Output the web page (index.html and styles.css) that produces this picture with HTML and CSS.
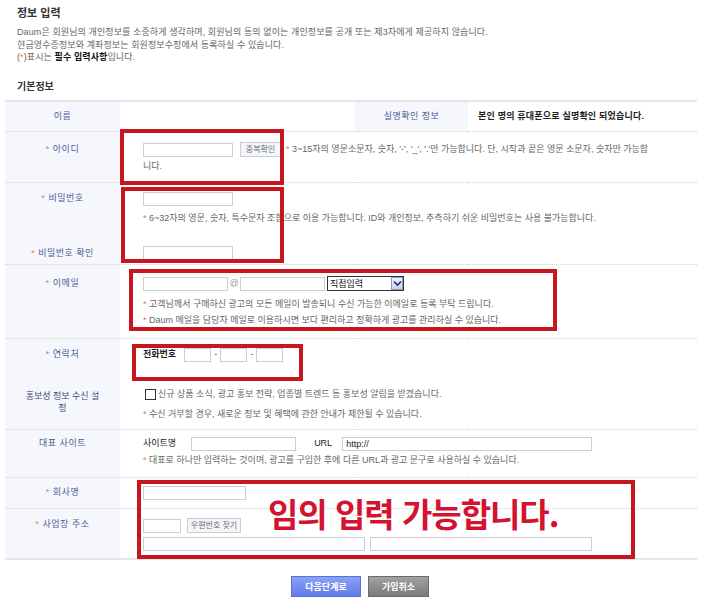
FILE: index.html
```html
<!DOCTYPE html>
<html lang="ko">
<head>
  <meta charset="UTF-8" />
  <title>정보 입력</title>
  <link rel="stylesheet" href="styles.css">
</head>
<body>

  <div class="intro-box">
    <h2 class="title">정보 입력</h2>
    <p class="intro">
      Daum은 회원님의 개인정보를 소중하게 생각하며, 회원님의 동의 없이는 개인정보를 공개 또는 제3자에게 제공하지 않습니다.<br>
      현금영수증정보와 계좌정보는 회원정보수정에서 등록하실 수 있습니다.<br>
      (<span class="req">*</span>)표시는 <b>필수 입력사항</b>입니다.
    </p>
    <h3 class="section">기본정보</h3>
  </div>

  <div class="form-wrap">
    <table class="form-table">
      <colgroup>
        <col class="c-label">
        <col class="c-value">
        <col class="c-label2">
        <col>
      </colgroup>
      <tbody>
        <tr class="row-name">
          <th>이름</th>
          <td class="blank"></td>
          <th class="sub-th">실명확인 정보</th>
          <td class="confirm">본인 명의 휴대폰으로 실명확인 되었습니다.</td>
        </tr>
        <tr class="row-id">
          <th><span class="req">*</span> 아이디</th>
          <td colspan="3">
            <input class="field w-id" type="text"><button class="small-btn" type="button">중복확인</button><span class="req">*</span> 3~15자의 영문소문자, 숫자, '-', '_', '.'만 가능합니다. 단, 시작과 끝은 영문 소문자, 숫자만 가능합니다.
          </td>
        </tr>
        <tr class="row-pw">
          <th><span class="req">*</span> 비밀번호</th>
          <td colspan="3">
            <input class="field w-id" type="password">
            <div class="hint"><span class="req">*</span> 6~32자의 영문, 숫자, 특수문자 조합으로 이용 가능합니다. ID와 개인정보, 추측하기 쉬운 비밀번호는 사용 불가능합니다.</div>
          </td>
        </tr>
        <tr class="row-pw2">
          <th><span class="req">*</span> 비밀번호 확인</th>
          <td colspan="3"><input class="field w-id" type="password"></td>
        </tr>
        <tr class="row-mail">
          <th><span class="req">*</span> 이메일</th>
          <td colspan="3">
            <input class="field w-mail" type="text"><span class="at">@</span><input class="field w-mail" type="text"><span class="select-box"><select class="select"><option>직접입력</option></select><span class="select-arrow"><svg width="9" height="7" viewBox="0 0 9 7"><path d="M1 1.5 L4.5 5 L8 1.5" fill="none" stroke="#1f2f6a" stroke-width="1.6"/></svg></span></span>
            <div class="hint-lines">
              <div><span class="req">*</span> 고객님께서 구매하신 광고의 모든 메일이 발송되니 수신 가능한 이메일로 등록 부탁 드립니다.</div>
              <div><span class="req">*</span> Daum 메일을 담당자 메일로 이용하시면 보다 편리하고 정확하게 광고를 관리하실 수 있습니다.</div>
            </div>
          </td>
        </tr>
        <tr class="row-tel">
          <th><span class="req">*</span> 연락처</th>
          <td colspan="3">
            <b class="inline-label">전화번호</b><input class="field w-tel" type="text"><span class="dash">-</span><input class="field w-tel" type="text"><span class="dash">-</span><input class="field w-tel" type="text">
          </td>
        </tr>
        <tr class="row-promo">
          <th class="wrap-th">홍보성 정보 수신 설정</th>
          <td colspan="3">
            <label class="check"><span class="box"></span>신규 상품 소식, 광고 홍보 전략, 업종별 트렌드 등 홍보성 알림을 받겠습니다.</label>
            <div class="hint small"><span class="req">*</span> 수신 거부할 경우, 새로운 정보 및 혜택에 관한 안내가 제한될 수 있습니다.</div>
          </td>
        </tr>
        <tr class="row-site">
          <th>대표 사이트</th>
          <td colspan="3">
            <span class="inline-label site">사이트명</span><input class="field w-site" type="text"><span class="inline-label url">URL</span><input class="field w-url" type="text" value="http://">
            <div class="hint small"><span class="req">*</span> 대표로 하나만 입력하는 것이며, 광고를 구입한 후에 다른 URL과 광고 문구로 사용하실 수 있습니다.</div>
          </td>
        </tr>
        <tr class="row-company">
          <th><span class="req">*</span> 회사명</th>
          <td colspan="3"><input class="field w-company" type="text"></td>
        </tr>
        <tr class="row-addr">
          <th><span class="req">*</span> 사업장 주소</th>
          <td colspan="3">
            <input class="field w-zip" type="text"><button class="small-btn zip-btn" type="button">우편번호 찾기</button><br>
            <input class="field w-addr" type="text"><input class="field w-addr" type="text">
          </td>
        </tr>
      </tbody>
    </table>

    <div class="mark mark-id"></div>
    <div class="mark mark-pw"></div>
    <div class="mark mark-mail"></div>
    <div class="mark mark-tel"></div>
    <div class="mark mark-free">임의 입력 가능합니다.</div>
  </div>

  <div class="actions">
    <button class="btn btn-next" type="button">다음단계로</button>
    <button class="btn btn-cancel" type="button">가입취소</button>
  </div>

</body>
</html>
```

FILE: styles.css
```css
body {
  margin: 0;
  font-family: "Liberation Sans", "Noto Sans CJK KR", sans-serif;
  font-size: 9px;
  color: #666;
  background-color: #fff;
}

.intro-box {
  margin-left: 17px;
}

.title {
  margin: 6px 0 0 0;
  font-size: 11px;
  line-height: 14px;
  color: #333;
}

.intro {
  margin: 6px 0 0 0;
  line-height: 12.5px;
  letter-spacing: 0.1px;
}

.intro b {
  color: #111;
}

.req {
  color: #f07a2c;
}

.section {
  margin: 16px 0 6px 0;
  font-size: 10px;
  line-height: 14px;
  color: #333;
}

.form-wrap {
  position: relative;
  width: 692px;
  margin-left: 5px;
}

.form-table {
  width: 100%;
  table-layout: fixed;
  border-collapse: collapse;
  border-top: 2px solid #e3e5ea;
  border-bottom: 2px solid #e3e5ea;
}

.c-label { width: 115px; }
.c-value { width: 235px; }
.c-label2 { width: 113px; }

.form-table tr {
  border-bottom: 1px dotted #d4d4d4;
}

.form-table th {
  background-color: #f5f7fc;
  color: #4b5a96;
  font-weight: normal;
  text-align: center;
  vertical-align: top;
  line-height: 17px;
  letter-spacing: 0.5px;
  padding: 9px 4px 0 4px;
}

.form-table td {
  vertical-align: top;
  line-height: 17px;
  padding: 9px 18px 0 23px;
}

.row-name { height: 31px; }
.row-id { height: 51px; }
.row-pw { height: 55px; }
.row-pw2 { height: 27px; }
.row-mail { height: 74px; }
.row-tel { height: 42px; }
.row-promo { height: 49px; }
.row-site { height: 48px; }
.row-company { height: 31px; }
.row-addr { height: 50px; }

.row-name th,
.row-name td {
  vertical-align: middle;
  padding-top: 0;
  padding-bottom: 0;
}

.sub-th {
  background-color: #f2f5fb;
}

.form-table td.confirm {
  padding-left: 10px;
  color: #222;
  font-weight: bold;
  letter-spacing: 0.2px;
}

.form-table .row-id td { padding-right: 42px; }

.row-pw td,
.row-pw th,
.row-pw2 td,
.row-pw2 th,
.row-tel td,
.row-tel th,
.row-addr td,
.row-addr th { padding-top: 7px; }

.row-pw,
.row-tel { border-bottom: none !important; }

.row-mail td,
.row-mail th { padding-top: 10px; }

.row-promo td { padding-top: 5px; }
.form-table th.wrap-th {
  padding: 9px 18px 0 18px;
  line-height: 12px;
  letter-spacing: 0;
  color: #3e4a80;
}

.row-site td,
.row-site th { padding-top: 5px; }

.row-company td,
.row-company th { padding-top: 6px; }

.row-addr td { line-height: 18px; }

.field {
  box-sizing: border-box;
  height: 14px;
  border: 1px solid #cdcdcd;
  padding: 0 3px;
  margin: 0;
  vertical-align: middle;
  font-family: "Liberation Sans", "Noto Sans CJK KR", sans-serif;
  font-size: 9px;
  color: #222;
  background-color: #fff;
}

.w-id { width: 90px; margin-right: 7px; }
.w-mail { width: 85px; }
.w-tel { width: 27px; }
.w-site { width: 105px; }
.w-url { width: 250px; }
.w-company { width: 103px; }
.w-zip { width: 38px; margin-right: 6px; }
.w-addr { width: 222px; margin-right: 5px; }

.small-btn {
  box-sizing: border-box;
  width: 41px;
  height: 15px;
  padding: 0;
  border: 1px solid #c8ccd4;
  background-color: #f5f6f8;
  color: #6a7080;
  font-family: "Liberation Sans", "Noto Sans CJK KR", sans-serif;
  font-size: 8px;
  line-height: 13px;
  vertical-align: middle;
  margin-right: 5px;
}

.small-btn.zip-btn {
  width: 54px;
}

.hint {
  margin-top: 3px;
}

.hint.small {
  margin-top: 1px;
  line-height: 14px;
}

.hint-lines {
  margin-top: 4px;
  line-height: 16px;
}

.at {
  display: inline-block;
  width: 12px;
  text-align: center;
  vertical-align: middle;
  color: #999;
}

.select-box {
  position: relative;
  display: inline-block;
  vertical-align: middle;
  margin-left: 2px;
}

.select {
  box-sizing: border-box;
  appearance: none;
  -webkit-appearance: none;
  width: 77px;
  height: 15px;
  border: 1px solid #333;
  border-radius: 0;
  padding: 0 2px;
  background-color: #fff;
  font-family: "Liberation Sans", "Noto Sans CJK KR", sans-serif;
  font-size: 9px;
  color: #111;
  display: block;
}

.select-arrow {
  position: absolute;
  top: 1px;
  right: 1px;
  width: 12px;
  height: 13px;
  box-sizing: border-box;
  border: 1px solid #8a9bc4;
  background: linear-gradient(#f0f3fb, #c7d2ec);
  display: flex;
  align-items: center;
  justify-content: center;
}

.inline-label {
  color: #222;
  margin-right: 8px;
}

.inline-label.site {
  margin-right: 15px;
}

.inline-label.url {
  margin-left: 18px;
  margin-right: 10px;
}

.dash {
  display: inline-block;
  width: 9px;
  text-align: center;
  vertical-align: middle;
  color: #555;
}

.check {
  display: inline-flex;
  align-items: center;
  margin-left: 2px;
}

.check .box {
  display: inline-block;
  width: 9px;
  height: 9px;
  border: 1px solid #333;
  margin-right: 2px;
}

.mark {
  position: absolute;
  box-sizing: border-box;
  border: 4px solid #c8161e;
}

.mark-id { left: 115px; top: 29px; width: 164px; height: 56px; }
.mark-pw { left: 116px; top: 87px; width: 163px; height: 76px; }
.mark-mail { left: 124px; top: 169px; width: 428px; height: 62px; }
.mark-tel { left: 127px; top: 244px; width: 171px; height: 37px; }

.mark-free {
  left: 132px;
  top: 380px;
  width: 498px;
  height: 79px;
  padding: 11px 0 0 127px;
  font-family: "Noto Sans CJK KR", sans-serif;
  font-size: 33px;
  line-height: 36px;
  font-weight: bold;
  letter-spacing: -1px;
  color: #d3132f;
}

.actions {
  display: flex;
  justify-content: center;
  gap: 7px;
  margin-top: 16px;
}

.btn {
  height: 21px;
  border-radius: 0;
  color: #fff;
  font-family: "Liberation Sans", "Noto Sans CJK KR", sans-serif;
  font-size: 9px;
  font-weight: bold;
  padding: 0;
}

.btn-next {
  width: 70px;
  border: 1px solid #5a72d8;
  background: linear-gradient(#8aa2f6, #5f7ce8);
}

.btn-cancel {
  width: 61px;
  border: 1px solid #6b6b6b;
  background: linear-gradient(#a2a2a2, #7a7a7a);
}
```
